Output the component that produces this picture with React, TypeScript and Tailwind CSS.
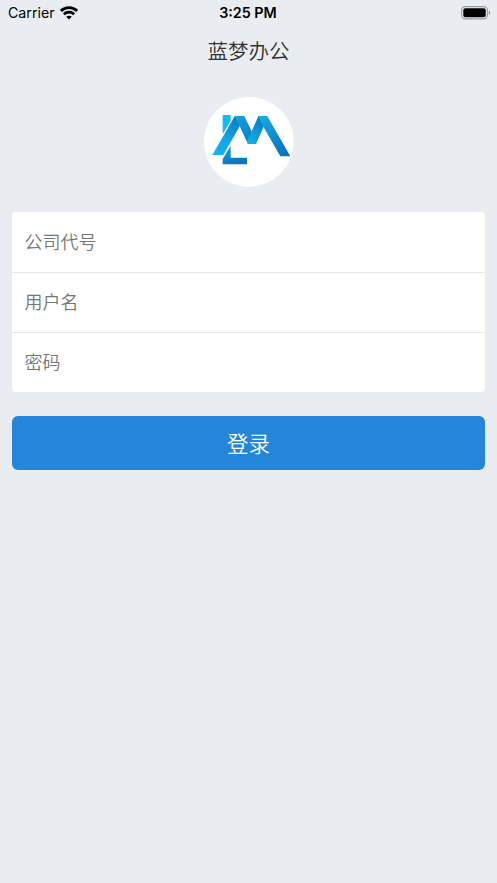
import { useState } from "react";

const fields = [
  { name: "company", type: "text", placeholder: "公司代号" },
  { name: "username", type: "text", placeholder: "用户名" },
  { name: "password", type: "password", placeholder: "密码" },
];

function WifiIcon() {
  return (
    <svg width="18" height="14" viewBox="0 0 18 14" fill="none" stroke="#000" strokeWidth="2.8">
      <path d="M0.9 4.9C5.4 0.4 12.6 0.4 17.1 4.9" />
      <path d="M3.9 8.2C6.8 5.4 11.2 5.4 14.1 8.2" />
      <path d="M9 13.4L6.2 10.7C7.8 9.3 10.2 9.3 11.8 10.7Z" fill="#000" stroke="none" />
    </svg>
  );
}

function BatteryIcon() {
  return (
    <svg width="30" height="14" viewBox="0 0 30 14">
      <rect x="0.6" y="0.6" width="25.8" height="12.3" rx="3.6" fill="none" stroke="#9a9b9e" strokeWidth="1.1" />
      <rect x="2.3" y="2.3" width="22.4" height="8.9" rx="2" fill="#000" />
      <path d="M27.8 4.6C29.6 5.2 29.6 8.2 27.8 8.8Z" fill="#8e9093" />
    </svg>
  );
}

function Logo() {
  return (
    <svg width="90" height="90" viewBox="17 21 270 270">
      <defs>
        <linearGradient id="leg" x1="0" y1="1" x2="0.8" y2="0">
          <stop offset="0" stopColor="#16b8f0" />
          <stop offset="0.5" stopColor="#12a2e2" />
          <stop offset="1" stopColor="#0879c2" />
        </linearGradient>
        <linearGradient id="rise" x1="0" y1="1" x2="0.7" y2="0">
          <stop offset="0" stopColor="#14b4ec" />
          <stop offset="1" stopColor="#087ac3" />
        </linearGradient>
        <linearGradient id="fall" x1="0" y1="0" x2="0.7" y2="1">
          <stop offset="0" stopColor="#14a2e0" />
          <stop offset="1" stopColor="#0a80c6" />
        </linearGradient>
        <linearGradient id="tail" x1="0" y1="0" x2="0.7" y2="1">
          <stop offset="0" stopColor="#18ace8" />
          <stop offset="1" stopColor="#0874bb" />
        </linearGradient>
        <linearGradient id="foot" x1="0" y1="0" x2="0.5" y2="1">
          <stop offset="0" stopColor="#159ddb" />
          <stop offset="1" stopColor="#0876bf" />
        </linearGradient>
      </defs>
      <circle cx="151.5" cy="155.5" r="134.5" fill="#fff" />
      <path d="M73 75H97V92L73 133Z" fill="#0cbdf4" />
      <path d="M109 79H138L124 109L75 195H42Z" fill="url(#leg)" />
      <path d="M109 79H138L160 124L165 162H149L124 109Z" fill="url(#fall)" />
      <path d="M180 79H207L196 110L173 162H149L146 154Z" fill="url(#rise)" />
      <path d="M180 79H207L276 199H246L195 110Z" fill="url(#tail)" />
      <path d="M73 208L97 167V203H146V223H73Z" fill="url(#foot)" />
    </svg>
  );
}

export default function Login() {
  const [values, setValues] = useState<Record<string, string>>({});

  return (
    <div className="w-full h-screen bg-[#e9edf2] flex flex-col font-['Inter','Noto_Sans_CJK_SC',sans-serif]">
      <div className="h-[26px] grid grid-cols-3 items-center pl-2 pr-[6px] text-black">
        <div className="flex items-center gap-[5px]">
          <span className="text-[14.2px] leading-none">Carrier</span>
          <WifiIcon />
        </div>
        <span className="text-center text-[14.3px] font-semibold leading-none pr-[3px]">3:25 PM</span>
        <div className="flex justify-end">
          <BatteryIcon />
        </div>
      </div>

      <h1 className="h-[51px] flex items-center justify-center text-[20.5px] font-[350] text-[#333] pt-px">蓝梦办公</h1>

      <div className="mt-5 h-[90px] flex justify-center">
        <Logo />
      </div>

      <form className="mt-[25px] px-3" onSubmit={(e) => e.preventDefault()}>
        <div className="rounded bg-white overflow-hidden">
          {fields.map((field) => (
            <input
              key={field.name}
              type={field.type}
              placeholder={field.placeholder}
              value={values[field.name] || ""}
              onChange={(e) => setValues({ ...values, [field.name]: e.target.value })}
              className="block w-full h-[60px] pl-[12.5px] pr-3 border-t border-[#e8e8ea] first:border-white text-[18px] font-[350] text-[#222] placeholder:text-[#757575] outline-none"
            />
          ))}
        </div>
        <button
          type="submit"
          className="mt-6 w-full h-[54px] pt-[2px] rounded-md bg-[#2486db] text-[21.5px] font-[350] text-white"
        >
          登录
        </button>
      </form>
    </div>
  );
}
